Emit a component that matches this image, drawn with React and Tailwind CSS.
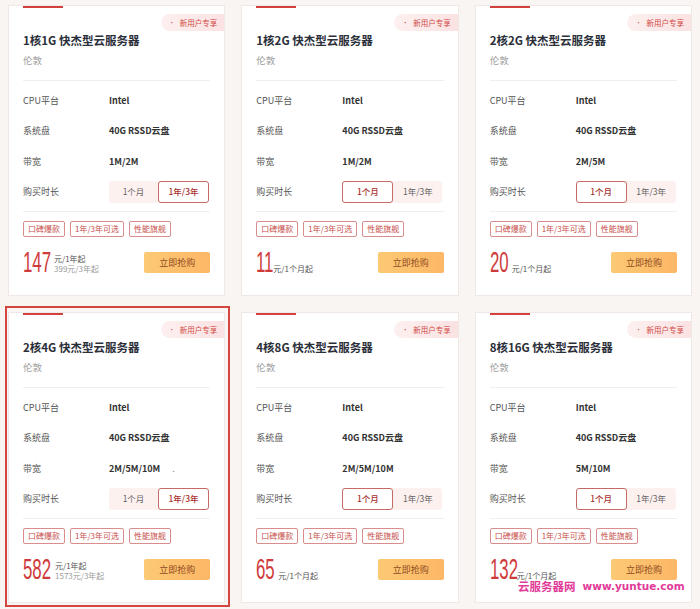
import React from "react";

const cards = [
  { title: "1核1G 快杰型云服务器", bw: "1M/2M", price: "147", pw: "w-[30px]", unit: "元/1年起", sub: "399元/3年起", year: true },
  { title: "1核2G 快杰型云服务器", bw: "1M/2M", price: "11", pw: "w-[16px]", unit: "元/1个月起", month: true },
  { title: "2核2G 快杰型云服务器", bw: "2M/5M", price: "20", pw: "w-[21px]", unit: "元/1个月起", month: true },
  { title: "2核4G 快杰型云服务器", bw: "2M/5M/10M", price: "582", pw: "w-[31px]", unit: "元/1年起", sub: "1573元/3年起", year: true, highlight: true, dot: true },
  { title: "4核8G 快杰型云服务器", bw: "2M/5M/10M", price: "65", pw: "w-[21px]", unit: "元/1个月起", month: true },
  { title: "8核16G 快杰型云服务器", bw: "5M/10M", price: "132", pw: "w-[26px]", unit: "元/1个月起", month: true },
];

function Row({ label, children }) {
  return (
    <div className="flex items-center h-[30.5px]">
      <div className="w-[86px] text-[9px] text-[#555]">{label}</div>
      {children}
    </div>
  );
}

function Half({ active, children }) {
  return active ? (
    <div className="flex-1 flex items-center justify-center bg-white border border-[#c56a66] rounded-[3px] text-[8.5px] text-[#a8302c] font-medium">
      {children}
    </div>
  ) : (
    <div className="flex-1 flex items-center justify-center text-[8.5px] text-[#666]">{children}</div>
  );
}

function Card({ d }) {
  return (
    <div className="relative">
      {d.highlight && (
        <div className="absolute -left-[3px] -right-[5px] -top-[6px] -bottom-[4px] border-2 border-[#d4453f] pointer-events-none z-10" />
      )}
      <div className="relative h-full bg-white border border-[#efe8e5] px-[14px] pb-[22px] overflow-hidden">
        <div className="-mt-px w-10 h-[3px] bg-[#d2413c]" />
        <div className="absolute right-0 top-[8px] h-[17px] flex items-center pl-[8px] pr-[7px] rounded-l-full bg-gradient-to-r from-[#fdf0f0] to-[#fbe2e2] text-[7.5px] text-[#d04a45]">
          <span className="mr-[5px] text-[6px]">•</span>新用户专享
        </div>
        <div className="mt-[24px] text-[11.5px] leading-[16px] font-bold text-[#2b2f3a]">{d.title}</div>
        <div className="mt-[5px] text-[9.5px] leading-[14px] text-[#a0a0a0]">伦敦</div>
        <div className="mt-[13px] h-px bg-[#efefef]" />
        <div className="mt-[4px]">
          <Row label="CPU平台">
            <div className="text-[9px] font-semibold text-[#333]">Intel</div>
          </Row>
          <Row label="系统盘">
            <div className="text-[9px] font-semibold text-[#333]">40G RSSD云盘</div>
          </Row>
          <Row label="带宽">
            <div className="text-[9px] font-semibold text-[#333]">
              {d.bw}
              {d.dot && <span className="ml-[12px] font-normal text-[#888]">.</span>}
            </div>
          </Row>
          <Row label="购买时长">
            <div className="w-[100px] h-[22px] flex rounded-[3px] bg-[#fdf1f0]">
              <Half active={d.month}>1个月</Half>
              <Half active={d.year}>1年/3年</Half>
            </div>
          </Row>
        </div>
        <div className="mt-[4px] h-px bg-[#f1eeee]" />
        <div className="mt-[9px] flex gap-[5px]">
          {["口碑爆款", "1年/3年可选", "性能旗舰"].map((t) => (
            <div key={t} className="h-[16px] px-[4px] flex items-center border border-[#d98d8d] rounded-[2px] text-[8px] text-[#c8504c]">
              {t}
            </div>
          ))}
        </div>
        <div className="mt-[15px] flex items-end justify-between h-[21px]">
          <div className="flex items-end">
            <div className={`${d.pw} h-[21px] overflow-visible`}>
              <span className="inline-block origin-left scale-x-[0.58] text-[29px] leading-[21px] text-[#cf3b3b] font-['Liberation_Sans',sans-serif]">
                {d.price}
              </span>
            </div>
            <div className="ml-[1px] flex flex-col text-[8px] leading-[9.5px]">
              <span className="text-[#555]">{d.unit}</span>
              {d.sub && <span className="text-[#9a9a9a]">{d.sub}</span>}
            </div>
          </div>
          <div className="w-[66px] h-[21px] flex items-center justify-center rounded-[2px] bg-gradient-to-r from-[#fcc974] to-[#fdb767] text-[9px] text-[#8f4b1f]">
            立即抢购
          </div>
        </div>
      </div>
    </div>
  );
}

export default function App() {
  return (
    <div className="relative w-[700px] min-h-[609px] bg-[#f9f5f3] font-['Noto_Sans_CJK_SC',sans-serif] overflow-hidden">
      <div className="grid grid-cols-3 gap-x-4 gap-y-4 px-2 pt-[5px]">
        {cards.map((d, i) => (
          <Card key={i} d={d} />
        ))}
      </div>
      <div className="absolute left-[518px] top-[578px] flex items-center gap-[7px] text-[#e23a98] font-bold z-20">
        <span className="text-[11.5px] leading-[16px]">云服务器网</span>
        <span className="text-[10.5px] leading-[16px] font-['DejaVu_Sans',sans-serif]">www.yuntue.com</span>
      </div>
    </div>
  );
}
